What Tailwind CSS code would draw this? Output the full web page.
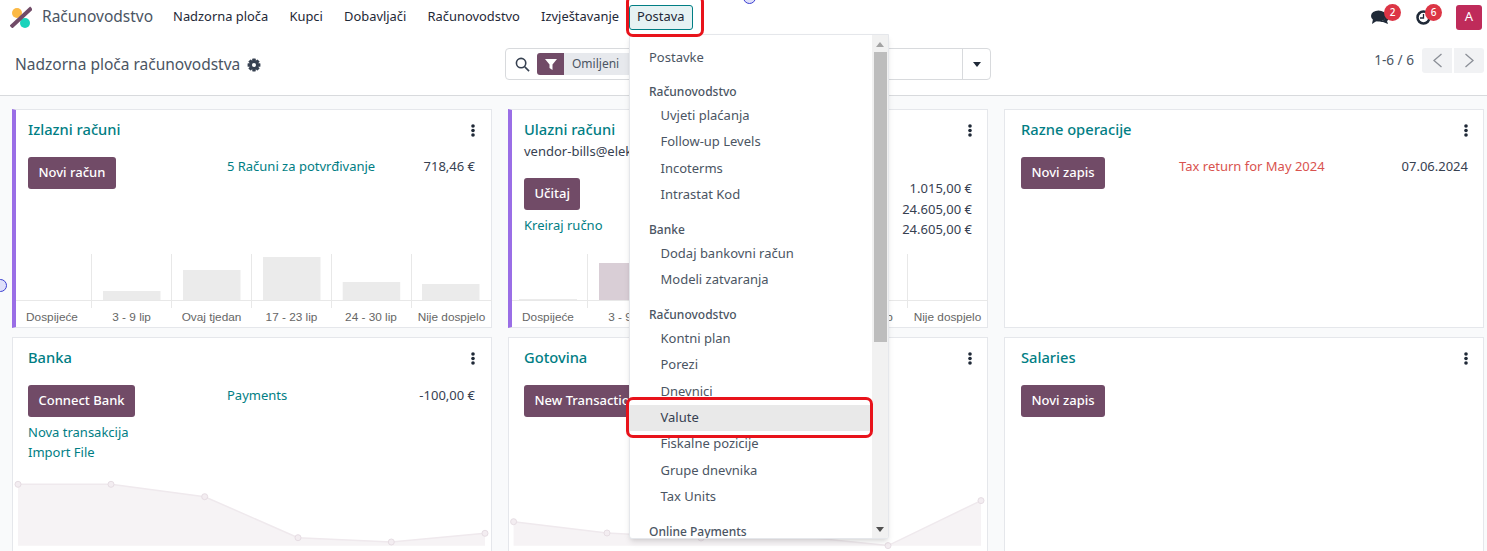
<!DOCTYPE html>
<html lang="en">
<head>
  <meta charset="UTF-8" />
  <title>Računovodstvo</title>
  <script src="https://cdn.jsdelivr.net/npm/@tailwindcss/browser@4"></script>
</head>
<body class="bg-white text-[#374151] font-['Noto_Sans',sans-serif] text-[13px]">
<div class="relative h-[551px] w-[1487px] overflow-hidden">

  <!-- Navbar -->
  <header class="h-[34px] bg-white flex items-center pl-[10px] pr-[5px]">
    <svg class="w-[22px] h-[22px]" viewBox="0 0 22 22">
      <circle cx="7" cy="7" r="5" fill="#fbb945"/>
      <circle cx="15" cy="17" r="5" fill="#1ad3bb"/>
      <path d="M1 21 L21.5 2" stroke="#714b67" stroke-width="4"/>
    </svg>
    <span class="ml-[10px] text-[15.5px] text-[#4b5563] w-[120.5px]">Računovodstvo</span>
    <nav class="flex items-center text-[#1f2937] text-[12.9px]">
      <a class="px-[10.6px]">Nadzorna ploča</a>
      <a class="px-[10.6px]">Kupci</a>
      <a class="px-[10.6px]">Dobavljači</a>
      <a class="px-[10.6px]">Računovodstvo</a>
      <a class="px-[10.6px]">Izvještavanje</a>
      <a class="-ml-[1px] h-[25px] w-[64px] justify-center flex items-center border border-[#017e84] rounded-[3px] bg-[#e6f2f3]">Postava</a>
    </nav>
    <div class="ml-auto flex items-center">
      <div class="relative w-[20px] h-[20px] mr-[24px]">
        <svg class="w-[20px] h-[20px]" viewBox="0 0 20 20" fill="#1f2937">
          <ellipse cx="8.5" cy="9" rx="7.5" ry="5.5"/>
          <path d="M3 12 L2 17 L8 13Z"/>
          <path d="M15.5 7 C19.5 8 20 12 17 14 L18 17 L13 15 C11 15 10 15 9 14.5 C13 14.5 16 12 15.5 7Z"/>
        </svg>
        <span class="absolute -top-[3px] left-[14px] w-[17px] h-[17px] rounded-full bg-[#dc3545] text-white text-[10px] font-medium flex items-center justify-center">2</span>
      </div>
      <div class="relative w-[20px] h-[20px] mr-[22px]">
        <svg class="w-[20px] h-[20px]" viewBox="0 0 20 20" fill="none" stroke="#1f2937">
          <circle cx="9.5" cy="10.5" r="6" stroke-width="2.5"/>
          <path d="M9.5 7v4H6" stroke-width="1.3"/>
        </svg>
        <span class="absolute -top-[3px] left-[11px] w-[17px] h-[17px] rounded-full bg-[#dc3545] text-white text-[10px] font-medium flex items-center justify-center">6</span>
      </div>
      <div class="w-[26px] h-[25px] rounded-[3px] bg-[#bf2b5a] text-white text-[13px] flex items-center justify-center">A</div>
    </div>
  </header>

  <!-- Control panel -->
  <div class="h-[62px] border-b border-[#d8dadd] flex items-center pl-[15px] pr-[3px] relative">
    <h1 class="text-[15.5px] text-[#4b5563] flex items-center gap-[7px]">Nadzorna ploča računovodstva
      <svg class="w-[14px] h-[14px]" viewBox="0 0 24 24" fill="#374151">
        <g>
          <rect x="9" y="1" width="6" height="22" rx="1"/>
          <rect x="9" y="1" width="6" height="22" rx="1" transform="rotate(45 12 12)"/>
          <rect x="9" y="1" width="6" height="22" rx="1" transform="rotate(90 12 12)"/>
          <rect x="9" y="1" width="6" height="22" rx="1" transform="rotate(135 12 12)"/>
        </g>
        <circle cx="12" cy="12" r="8"/>
        <circle cx="12" cy="12" r="3.5" fill="white"/>
      </svg>
    </h1>
    <div class="absolute left-[505px] top-[14px] w-[486px] h-[32px] border border-[#d8dadd] rounded-[4px] flex items-center">
      <svg class="ml-[9px] w-[15px] h-[15px]" viewBox="0 0 16 16" fill="none" stroke="#374151" stroke-width="1.7"><circle cx="6.5" cy="6.5" r="5"/><path d="M10.5 10.5 L15 15"/></svg>
      <div class="ml-[7px] w-[27px] h-[22px] rounded-l-[3px] bg-[#714b67] flex items-center justify-center">
        <svg class="w-[12px] h-[12px]" viewBox="0 0 12 12" fill="white"><path d="M0 1h12L7.5 6.5V12L4.5 10V6.5Z"/></svg>
      </div>
      <div class="w-[100px] h-[22px] bg-[#e7e9ed] text-[#4b5563] text-[12px] flex items-center pl-[8px]">Omiljeni</div>
      <div class="ml-auto h-full w-[28px] border-l border-[#d8dadd] flex items-center justify-center">
        <span class="w-0 h-0 border-x-[4.5px] border-x-transparent border-t-[5px] border-t-[#1f2937]"></span>
      </div>
    </div>
    <div class="ml-auto -mt-[9px] flex items-center">
      <span class="text-[13.6px] text-[#4b5563] mr-[8px]">1-6 / 6</span>
      <button class="w-[30px] h-[25px] bg-[#f1f2f4] rounded-l-[3px] flex items-center justify-center mr-[2px]"><svg class="w-[11px] h-[15px]" viewBox="0 0 11 15" fill="none" stroke="#8b8f97" stroke-width="1.3"><path d="M9.5 1 L2 7.5 L9.5 14"/></svg></button>
      <button class="w-[30px] h-[25px] bg-[#f1f2f4] rounded-r-[3px] flex items-center justify-center"><svg class="w-[11px] h-[15px]" viewBox="0 0 11 15" fill="none" stroke="#8b8f97" stroke-width="1.3"><path d="M1.5 1 L9 7.5 L1.5 14"/></svg></button>
    </div>
  </div>

  <!-- Kanban -->
  <main class="bg-[#f9fafb] h-[455px] pt-[13px] pl-[12px] grid grid-cols-[480px_480px_480px] gap-x-[16px] gap-y-[9px] grid-rows-[219px_300px]">

    <!-- Izlazni računi -->
    <section class="relative bg-white border border-[#e5e7eb] border-l-[4px] border-l-[#9a6ee6] pl-[12px] pr-[16px] pt-[8px]">
      <div class="flex justify-between"><h2 class="text-[#017e84] text-[14.7px] font-medium leading-[22px]">Izlazni računi</h2><svg class="mt-[6px]" width="4" height="13" viewBox="0 0 4 13" fill="#1f2937"><circle cx="2" cy="2" r="1.8"/><circle cx="2" cy="6.5" r="1.8"/><circle cx="2" cy="11" r="1.8"/></svg></div>
      <div class="mt-[17px] flex items-start">
        <button class="h-[32px] px-[10.5px] rounded-[3px] bg-[#714b67] text-white font-medium">Novi račun</button>
        <a class="ml-[111px] text-[#017e84] leading-[19px]">5 Računi za potvrđivanje</a>
        <span class="ml-auto leading-[19px]">718,46 €</span>
      </div>
      <svg class="absolute left-0 top-[137px]" width="476" height="81" viewBox="0 0 476 81">
        <g fill="#ebebeb"><rect x="87" y="44" width="57.5" height="9"/><rect x="167" y="23" width="57.5" height="30"/><rect x="247" y="10" width="57.5" height="43"/><rect x="326.7" y="35" width="57.5" height="18"/><rect x="406" y="37" width="57.5" height="16"/></g>
        <g stroke="#e8e8e8"><path d="M0 53.5H476M75.5 7V61M155.5 7V61M235.5 7V61M315.5 7V61M395.5 7V61"/></g>
        <g font-family="Liberation Sans" font-size="11.8" fill="#666" text-anchor="middle"><text x="36" y="74">Dospijeće</text><text x="115.6" y="74">3 - 9 lip</text><text x="195.5" y="74">Ovaj tjedan</text><text x="275.5" y="74">17 - 23 lip</text><text x="355" y="74">24 - 30 lip</text><text x="435.5" y="74">Nije dospjelo</text></g>
      </svg>
    </section>

    <!-- Ulazni računi -->
    <section class="relative bg-white border border-[#e5e7eb] border-l-[4px] border-l-[#9a6ee6] pl-[12px] pr-[15px] pt-[8px]">
      <div class="flex justify-between"><h2 class="text-[#017e84] text-[14.7px] font-medium leading-[22px]">Ulazni računi</h2><svg class="mt-[6px]" width="4" height="13" viewBox="0 0 4 13" fill="#1f2937"><circle cx="2" cy="2" r="1.8"/><circle cx="2" cy="6.5" r="1.8"/><circle cx="2" cy="11" r="1.8"/></svg></div>
      <div class="leading-[20px] mt-[1px]">vendor-bills@elektronika.hr</div>
      <div class="mt-[17px] flex items-start justify-between">
        <div>
          <button class="h-[32px] px-[10.5px] rounded-[3px] bg-[#714b67] text-white font-medium">Učitaj</button>
          <a class="block mt-[5px] text-[#017e84] leading-[20px]">Kreiraj ručno</a>
        </div>
        <div class="text-right leading-[20.5px]">
          <div>1.015,00 €</div><div>24.605,00 €</div><div>24.605,00 €</div>
        </div>
      </div>
      <svg class="absolute left-0 top-[137px]" width="476" height="81" viewBox="0 0 476 81">
        <rect x="7" y="52" width="58" height="1.5" fill="#ebebeb"/>
        <rect x="87" y="16" width="57.5" height="37" fill="#d9ced6"/>
        <g stroke="#e8e8e8"><path d="M0 53.5H476M75.5 7V61M395.5 7V61"/></g>
        <g font-family="Liberation Sans" font-size="11.8" fill="#666" text-anchor="middle"><text x="36" y="74">Dospijeće</text><text x="115.6" y="74">3 - 9 lip</text><text x="355" y="74">24 - 30 lip</text><text x="435.5" y="74">Nije dospjelo</text></g>
      </svg>
    </section>

    <!-- Razne operacije -->
    <section class="bg-white border border-[#e5e7eb] pl-[16px] pr-[15px] pt-[8px]">
      <div class="flex justify-between"><h2 class="text-[#017e84] text-[14.7px] font-medium leading-[22px]">Razne operacije</h2><svg class="mt-[6px]" width="4" height="13" viewBox="0 0 4 13" fill="#1f2937"><circle cx="2" cy="2" r="1.8"/><circle cx="2" cy="6.5" r="1.8"/><circle cx="2" cy="11" r="1.8"/></svg></div>
      <div class="mt-[17px] flex items-start">
        <button class="h-[32px] px-[10.5px] rounded-[3px] bg-[#714b67] text-white font-medium">Novi zapis</button>
        <a class="ml-[74px] text-[#d9534f] leading-[19px]">Tax return for May 2024</a>
        <span class="ml-auto leading-[19px]">07.06.2024</span>
      </div>
    </section>

    <!-- Banka -->
    <section class="relative bg-white border border-[#e5e7eb] pl-[15px] pr-[16px] pt-[8px]">
      <div class="flex justify-between"><h2 class="text-[#017e84] text-[14.7px] font-medium leading-[22px]">Banka</h2><svg class="mt-[6px]" width="4" height="13" viewBox="0 0 4 13" fill="#1f2937"><circle cx="2" cy="2" r="1.8"/><circle cx="2" cy="6.5" r="1.8"/><circle cx="2" cy="11" r="1.8"/></svg></div>
      <div class="mt-[17px] flex items-start">
        <div class="w-[199px]">
          <button class="h-[32px] px-[10.5px] rounded-[3px] bg-[#714b67] text-white font-medium">Connect Bank</button>
          <a class="block mt-[5px] text-[#017e84] leading-[20px]">Nova transakcija</a>
          <a class="block text-[#017e84] leading-[20px]">Import File</a>
        </div>
        <a class="text-[#017e84] leading-[21px]">Payments</a>
        <span class="ml-auto leading-[21px]">-100,00 €</span>
      </div>
      <svg class="absolute left-0 top-[120px]" width="478" height="100" viewBox="0 0 478 100">
        <path d="M5 26.3 L98 26.3 L191.7 38.7 L285 79.7 L378.3 84 L472 75.3 V87.7 H5Z" fill="#f6f3f5"/>
        <path d="M5 26.3 L98 26.3 L191.7 38.7 L285 79.7 L378.3 84 L472 75.3" fill="none" stroke="#efe9ed" stroke-width="1.5"/>
        <g fill="#f3edf1" stroke="#e6dde3"><circle cx="5" cy="26.3" r="3"/><circle cx="98" cy="26.3" r="3"/><circle cx="191.7" cy="38.7" r="3"/><circle cx="285" cy="79.7" r="3"/><circle cx="378.3" cy="84" r="3"/><circle cx="472" cy="75.3" r="3"/></g>
      </svg>
    </section>

    <!-- Gotovina -->
    <section class="relative bg-white border border-[#e5e7eb] pl-[15px] pr-[15px] pt-[8px]">
      <div class="flex justify-between"><h2 class="text-[#017e84] text-[14.7px] font-medium leading-[22px]">Gotovina</h2><svg class="mt-[6px]" width="4" height="13" viewBox="0 0 4 13" fill="#1f2937"><circle cx="2" cy="2" r="1.8"/><circle cx="2" cy="6.5" r="1.8"/><circle cx="2" cy="11" r="1.8"/></svg></div>
      <div class="mt-[17px]">
        <button class="h-[32px] px-[10.5px] rounded-[3px] bg-[#714b67] text-white font-medium">New Transaction</button>
      </div>
      <svg class="absolute left-0 top-[120px]" width="478" height="100" viewBox="0 0 478 100">
        <path d="M4.6 63.7 L98 75 L192 80 L285 78 L379 87.6 L472 42.6 V87.7 H4.6Z" fill="#f6f3f5"/>
        <path d="M4.6 63.7 L98 75 L192 80 L285 78 L379 87.6 L472 42.6" fill="none" stroke="#efe9ed" stroke-width="1.5"/>
        <g fill="#f3edf1" stroke="#e6dde3"><circle cx="4.6" cy="63.7" r="3"/><circle cx="98" cy="75" r="3"/><circle cx="192" cy="80" r="3"/><circle cx="379" cy="87.6" r="3"/><circle cx="472" cy="42.6" r="3"/></g>
      </svg>
    </section>

    <!-- Salaries -->
    <section class="bg-white border border-[#e5e7eb] pl-[16px] pr-[15px] pt-[8px]">
      <div class="flex justify-between"><h2 class="text-[#017e84] text-[14.7px] font-medium leading-[22px]">Salaries</h2><svg class="mt-[6px]" width="4" height="13" viewBox="0 0 4 13" fill="#1f2937"><circle cx="2" cy="2" r="1.8"/><circle cx="2" cy="6.5" r="1.8"/><circle cx="2" cy="11" r="1.8"/></svg></div>
      <div class="mt-[17px]">
        <button class="h-[32px] px-[10.5px] rounded-[3px] bg-[#714b67] text-white font-medium">Novi zapis</button>
      </div>
    </section>
  </main>

  <!-- Postava dropdown -->
  <div class="absolute left-[629px] top-[34px] w-[260px] h-[505px] bg-white border border-[#e5e7eb] rounded-b-[3px] shadow-md flex overflow-hidden">
    <ul class="flex-1 text-[#4b5563] pt-[9.5px]">
      <li class="pl-[19px] h-[26.33px] flex items-center">Postavke</li>
      <li class="pl-[19px] mt-[10.8px] h-[21px] flex items-center text-[12px] font-medium">Računovodstvo</li>
      <li class="pl-[30.5px] h-[26.33px] flex items-center">Uvjeti plaćanja</li>
      <li class="pl-[30.5px] h-[26.33px] flex items-center">Follow-up Levels</li>
      <li class="pl-[30.5px] h-[26.33px] flex items-center">Incoterms</li>
      <li class="pl-[30.5px] h-[26.33px] flex items-center">Intrastat Kod</li>
      <li class="pl-[19px] mt-[11.8px] h-[21px] flex items-center text-[12px] font-medium">Banke</li>
      <li class="pl-[30.5px] h-[26.33px] flex items-center">Dodaj bankovni račun</li>
      <li class="pl-[30.5px] h-[26.33px] flex items-center">Modeli zatvaranja</li>
      <li class="pl-[19px] mt-[11.3px] h-[21px] flex items-center text-[12px] font-medium">Računovodstvo</li>
      <li class="pl-[30.5px] h-[26.33px] flex items-center">Kontni plan</li>
      <li class="pl-[30.5px] h-[26.33px] flex items-center">Porezi</li>
      <li class="pl-[30.5px] h-[26.33px] flex items-center">Dnevnici</li>
      <li class="pl-[30.5px] h-[26.33px] flex items-center bg-[#e9e9e9] text-[#374151]">Valute</li>
      <li class="pl-[30.5px] h-[26.33px] flex items-center">Fiskalne pozicije</li>
      <li class="pl-[30.5px] h-[26.33px] flex items-center">Grupe dnevnika</li>
      <li class="pl-[30.5px] h-[26.33px] flex items-center">Tax Units</li>
      <li class="pl-[19px] mt-[11.3px] h-[21px] flex items-center text-[12px] font-medium">Online Payments</li>
    </ul>
    <div class="w-[16px] bg-[#f1f1f1] relative shrink-0">
      <span class="absolute left-[4px] top-[7px] w-0 h-0 border-x-[4px] border-x-transparent border-b-[5px] border-b-[#a3a3a3]"></span>
      <div class="absolute left-[2px] w-[13px] top-[17px] h-[290px] bg-[#bdbdbd]"></div>
      <span class="absolute left-[4px] bottom-[6px] w-0 h-0 border-x-[4px] border-x-transparent border-t-[5px] border-t-[#505050]"></span>
    </div>
  </div>

  <!-- Red annotation boxes -->
  <div class="absolute left-[626px] -top-[5px] w-[78px] h-[42px] border-[3px] border-[#e8131b] rounded-[7px]"></div>
  <div class="absolute left-[626px] top-[397px] w-[247px] h-[41px] border-[3px] border-[#e8131b] rounded-[7px]"></div>

  <!-- Stray markers -->
  <div class="absolute left-[743px] -top-[9px] w-[13px] h-[13px] rounded-full bg-[#dfe0fa] border border-[#3b3fd1]"></div>
  <div class="absolute -left-[6px] top-[279px] w-[13px] h-[13px] rounded-full bg-[#dfe0fa] border border-[#3b3fd1]"></div>
</div>
</body>
</html>
